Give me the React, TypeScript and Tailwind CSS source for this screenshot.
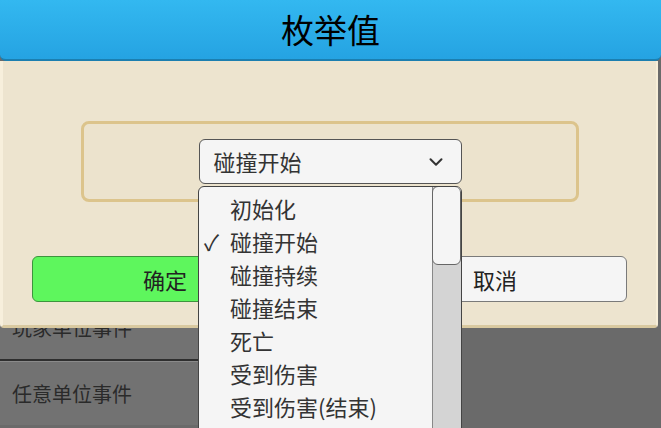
import { ChevronDown } from 'lucide-react'

const options = ['初始化', '碰撞开始', '碰撞持续', '碰撞结束', '死亡', '受到伤害', '受到伤害(结束)']
const selected = '碰撞开始'

const font = { fontFamily: '"Noto Sans CJK SC", "Noto Sans", sans-serif' }

const App = () => {
    return (
        <div className="relative w-[661px] h-[428px] overflow-hidden bg-[#6a6a6a] text-[#222]" style={font}>
            {/* event list behind the dialog */}
            <div className="flex flex-col pt-[297px] w-[200px]">
                <div className="h-[64px] flex items-center pl-[12px] bg-[#727272] border-b-2 border-[#2e2e2e] text-[20px] text-[#2a2a2a]">
                    玩家单位事件
                </div>
                <div className="h-[64px] flex items-center pl-[12px] bg-[#727272] border-t border-[#8a8a8a] text-[20px] text-[#2a2a2a]">
                    任意单位事件
                </div>
            </div>

            {/* dialog */}
            <div className="absolute left-0 top-0 w-[661px] h-[328px] flex flex-col">
                <div className="h-[61px] flex items-center justify-center rounded-b-[6px] bg-gradient-to-b from-[#33b8f0] to-[#25a3e2] border-b-2 border-[#1b7fb0] text-[33px] text-black">
                    枚举值
                </div>
                <div className="flex-1 w-[658px] bg-[#ede4cf] border-l-[3px] border-l-[#f7efdc] border-r-2 border-r-[#f7eed8] border-b-[3px] border-b-[#d9c9a0] rounded-b-[4px] flex flex-col">
                    <div className="mt-[60px] ml-[78px] w-[498px] h-[81px] rounded-[8px] border-[3px] border-[#dcc48c] bg-[#ece3cd] flex justify-center pt-[15px]">
                        <div className="w-[263px] h-[45px] rounded-[6px] border border-[#555] bg-[#f5f5f5] flex items-center justify-between pl-[14px] pr-[14px] text-[22px] text-[#333]">
                            <span>{selected}</span>
                            <ChevronDown size={22} strokeWidth={2.2} className="text-[#333]" />
                        </div>
                    </div>
                    <div className="mt-[54px] flex">
                        <div className="ml-[29px] w-[266px] h-[46px] rounded-[6px] border border-[#3d943d] bg-[#5ef65d] flex items-center justify-center text-[22px]">
                            确定
                        </div>
                        <div className="ml-[65px] w-[264px] h-[46px] rounded-[6px] border border-[#7a7a7a] bg-[#f5f5f5] flex items-center justify-center text-[22px]">
                            取消
                        </div>
                    </div>
                </div>
            </div>

            {/* open dropdown */}
            <div className="absolute left-[198px] top-[186px] w-[264px] h-[260px] rounded-t-[6px] border border-[#444] bg-[#f5f5f5] flex overflow-hidden">
                <div className="flex-1 flex flex-col pt-[5px]">
                    {options.map(opt => (
                        <div key={opt} className="h-[33px] flex items-center text-[22px] text-[#333]">
                            <span className="w-[31px] pl-[5px] text-[22px]">{opt === selected ? '✓' : ''}</span>
                            <span>{opt}</span>
                        </div>
                    ))}
                </div>
                <div className="w-[29px] bg-[#d4d4d4] border-l border-[#888]">
                    <div className="h-[79px] -ml-px -mt-px rounded-[6px] border border-[#666] bg-[#f5f5f5]" />
                </div>
            </div>
        </div>
    )
}

export default App
